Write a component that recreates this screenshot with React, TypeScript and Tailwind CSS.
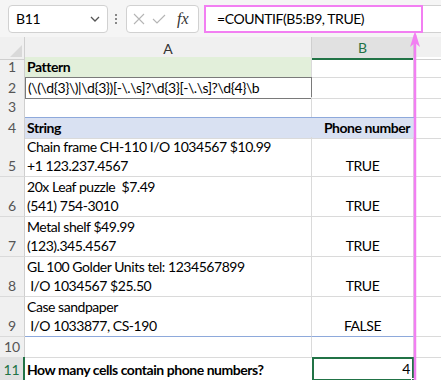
import React from "react";

const font = { fontFamily: "Lato, 'Open Sans', sans-serif" };

type Row = {
  n: string;
  h: string;
  a?: React.ReactNode;
  b?: string;
  kind?: "pattern" | "regex" | "head" | "body" | "last" | "total";
};

const rows: Row[] = [
  { n: "1", h: "h-[20px]", a: "Pattern", kind: "pattern" },
  { n: "2", h: "h-[20px]", a: "(\\(\\d{3}\\)|\\d{3})[-\\.\\s]?\\d{3}[-\\.\\s]?\\d{4}\\b", kind: "regex" },
  { n: "3", h: "h-[20px]" },
  { n: "4", h: "h-[20px]", a: "String", b: "Phone number", kind: "head" },
  { n: "5", h: "h-[40px]", a: "Chain frame CH-110 I/O 1034567 $10.99\n+1 123.237.4567", b: "TRUE", kind: "body" },
  { n: "6", h: "h-[40px]", a: "20x Leaf puzzle  $7.49\n(541) 754-3010", b: "TRUE", kind: "body" },
  { n: "7", h: "h-[40px]", a: "Metal shelf $49.99\n(123).345.4567", b: "TRUE", kind: "body" },
  { n: "8", h: "h-[40px]", a: "GL 100 Golder Units tel: 1234567899\n I/O 1034567 $25.50", b: "TRUE", kind: "body" },
  { n: "9", h: "h-[40px]", a: "Case sandpaper\n I/O 1033877, CS-190", b: "FALSE", kind: "last" },
  { n: "10", h: "h-[20px]" },
  { n: "11", h: "h-[20px]", a: "How many cells contain phone numbers?", b: "4", kind: "total" },
];

const Toolbar = () => (
  <div className="h-[37px] bg-[#f5f5f5] flex items-center relative">
    <div className="ml-[8px] w-[100px] h-[28px] bg-white border border-[#d1d1d1] rounded-[4px] flex items-center justify-between pl-[7px] pr-[6px]">
      <span className="text-[14px] tracking-[-0.3px] text-black">B11</span>
      <svg width="12" height="12" viewBox="0 0 12 12">
        <path d="M2 4 L6 8 L10 4" fill="none" stroke="#555" strokeWidth="1.3" />
      </svg>
    </div>
    <div className="ml-[7px] flex flex-col gap-[2px]">
      <span className="w-[2px] h-[2px] bg-[#888]" />
      <span className="w-[2px] h-[2px] bg-[#888]" />
      <span className="w-[2px] h-[2px] bg-[#888]" />
    </div>
    <div className="ml-[9px] w-[73px] h-[28px] bg-white border border-[#d1d1d1] rounded-[4px] flex items-center pl-[6px] gap-[7px]">
      <svg width="12" height="12" viewBox="0 0 12 12">
        <path d="M1 1 L11 11 M11 1 L1 11" stroke="#b5b5b5" strokeWidth="1.1" fill="none" />
      </svg>
      <svg width="14" height="12" viewBox="0 0 14 12">
        <path d="M1 6 L5 10 L13 2" stroke="#b5b5b5" strokeWidth="1.1" fill="none" />
      </svg>
      <span className="italic text-[16px] text-[#333] ml-[4px]" style={{ fontFamily: "'Liberation Serif', serif" }}>
        fx
      </span>
    </div>
    <div className="ml-[5px] w-[219px] h-[28px] bg-white border-2 border-[#f27ff2] flex items-center pl-[11px]">
      <span className="text-[14px] tracking-[-0.45px] text-black">=COUNTIF(B5:B9, TRUE)</span>
    </div>
    <div className="flex-1 h-[28px] bg-white border-y border-[#d1d1d1]" />
  </div>
);

const ColHeader = () => (
  <div className="grid grid-cols-[25px_287px_102px_1fr] h-[20px] bg-[#f0f0f0] text-[14px]">
    <div className="border-r border-b border-[#cfcfcf] relative">
      <svg className="absolute right-[2px] bottom-[2px]" width="12" height="12" viewBox="0 0 12 12">
        <path d="M12 0 L12 12 L0 12 Z" fill="#d9d9d9" />
      </svg>
    </div>
    <div className="border-r border-b border-[#cfcfcf] flex items-center justify-center text-[#333]">A</div>
    <div className="bg-[#e1e1e1] border-r border-[#cfcfcf] border-b-2 border-b-[#217346] flex items-center justify-center text-[#217346]">B</div>
    <div className="border-b border-[#cfcfcf]" />
  </div>
);

const SheetRow = ({ r }: { r: Row }) => {
  const sel = r.kind === "total";
  let aCls = "border-r border-b border-[#dadada]";
  let bCls = "border-r border-b border-[#dadada]";
  if (r.kind === "pattern") aCls = "bg-[#e2efda] border-r border-b border-[#dadada] font-bold";
  if (r.kind === "regex") aCls = "border border-[#7a7a7a]";
  if (r.kind === "head") {
    aCls = "bg-[#d9e1f2] border-t border-t-[#8ea9db] border-b border-[#dadada] font-bold";
    bCls = "bg-[#d9e1f2] border-t border-t-[#8ea9db] border-b border-[#dadada] font-bold";
  }
  if (r.kind === "last") {
    aCls = "border-r border-[#dadada] border-b border-b-[#8ea9db]";
    bCls = "border-r border-[#dadada] border-b border-b-[#8ea9db]";
  }
  if (sel) {
    aCls = "border-b border-[#dadada] font-bold";
    bCls = "border-2 border-[#217346]";
  }
  const bAlign = r.kind === "head" ? "justify-end pr-[4px]" : sel ? "justify-end pr-[2px]" : "justify-center";
  return (
    <div className={`grid grid-cols-[25px_287px_102px_1fr] ${r.h} text-[14px] tracking-[-0.45px] leading-[19px] text-black`}>
      <div
        className={`flex items-end justify-center pb-[1px] text-[14px] tracking-normal ${
          sel ? "bg-[#e1e1e1] text-[#217346] border-r-2 border-r-[#217346]" : "bg-[#f0f0f0] text-[#555] border-r border-[#cfcfcf]"
        } border-b border-b-[#dadada]`}
      >
        {r.n}
      </div>
      <div className={`flex items-end pl-[2px] pb-[1px] whitespace-pre overflow-visible ${aCls}`}>{r.a}</div>
      <div className={`flex items-end pb-[1px] ${bAlign} ${bCls} relative`}>
        {r.b}
        {sel && <span className="absolute right-[-4px] bottom-[-4px] w-[5px] h-[5px] bg-[#217346] border border-white" />}
      </div>
      <div className="border-b border-[#dadada]" />
    </div>
  );
};

export default function App() {
  return (
    <div className="w-[441px] h-[380px] overflow-hidden bg-white relative" style={font}>
      <Toolbar />
      <ColHeader />
      {rows.map((r) => (
        <SheetRow key={r.n} r={r} />
      ))}
      <svg className="absolute left-[409px] top-[31px]" width="12" height="349" viewBox="0 0 12 349">
        <path d="M6 4 L6 349" stroke="#f27ff2" strokeWidth="2.5" />
        <path d="M6 0 L1 16 L6 12 L11 16 Z" fill="#f27ff2" />
      </svg>
    </div>
  );
}
